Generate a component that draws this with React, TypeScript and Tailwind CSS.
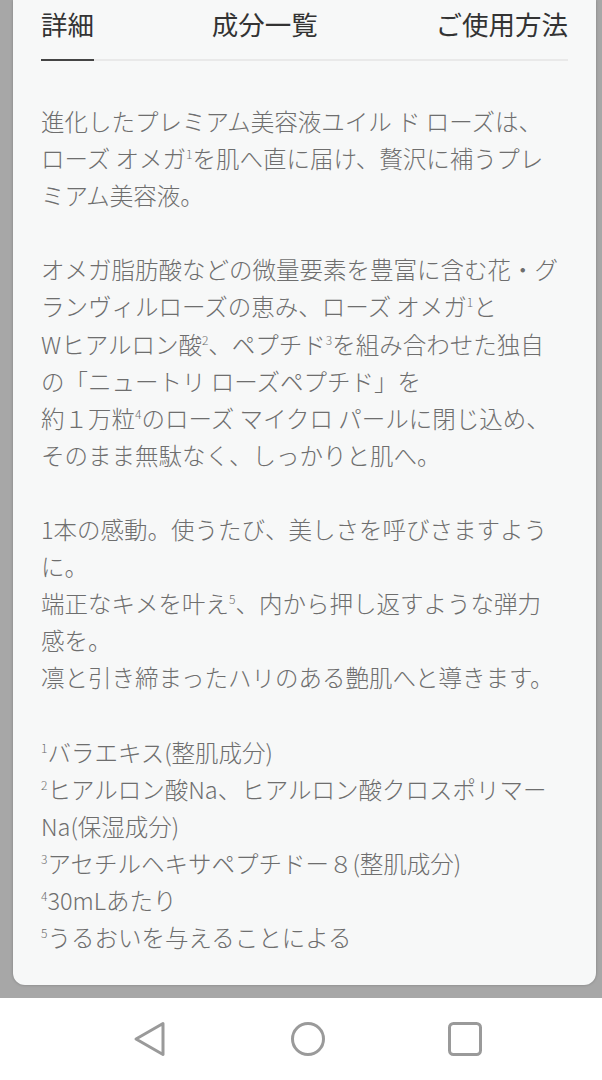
import React from 'react';

const TABS = ['詳細', '成分一覧', 'ご使用方法'];

function Sup({ n }: { n: string }) {
  return <sup className="text-[12px] top-[-9px]">{n}</sup>;
}

export default function App() {
  return (
    <div
      className="w-[602px] h-[1080px] flex flex-col overflow-hidden"
      style={{ fontFamily: '"Noto Sans CJK JP", "Noto Sans", sans-serif' }}
    >
      <div className="flex-1 bg-[#a7a7a7] pl-[13px] pr-[6px] pb-[13px] flex flex-col">
        <div className="flex-1 bg-[#f7f8f8] rounded-b-[12px] px-[28px] shadow-[0_0_3px_rgba(0,0,0,0.25)]">
          {/* tabs */}
          <div className="flex justify-between border-b-2 border-[#e9e9e9] pt-[6px]">
            {TABS.map((t, i) => (
              <div
                key={t}
                className={`text-[26.5px] leading-[36px] text-[#333] pb-[17px] -mb-[2px] ${
                  i === 0 ? 'border-b-2 border-[#444]' : 'border-b-2 border-transparent'
                }`}
              >
                {t}
              </div>
            ))}
          </div>

          <div className="mt-[42px] text-[23.5px] leading-[37.1px] font-light text-[#6e6e6e]">
            <p>
              進化したプレミアム美容液ユイル ド ローズは、<br />
              ローズ オメガ<Sup n="1" />を肌へ直に届け、贅沢に補うプレ<br />
              ミアム美容液。
            </p>
            <br />
            <p>
              オメガ脂肪酸などの微量要素を豊富に含む花・グ<br />
              ランヴィルローズの恵み、ローズ オメガ<Sup n="1" />と<br />
              Wヒアルロン酸<Sup n="2" />、ペプチド<Sup n="3" />を組み合わせた独自<br />
              の「ニュートリ ローズペプチド」を<br />
              約１万粒<Sup n="4" />のローズ マイクロ パールに閉じ込め、<br />
              そのまま無駄なく、しっかりと肌へ。
            </p>
            <br />
            <p>
              1本の感動。使うたび、美しさを呼びさますよう<br />
              に。<br />
              端正なキメを叶え<Sup n="5" />、内から押し返すような弾力<br />
              感を。<br />
              凛と引き締まったハリのある艶肌へと導きます。
            </p>
            <br />
            <p>
              <Sup n="1" />バラエキス(整肌成分)<br />
              <Sup n="2" />ヒアルロン酸Na、ヒアルロン酸クロスポリマー<br />
              Na(保湿成分)<br />
              <Sup n="3" />アセチルヘキサペプチドー８(整肌成分)<br />
              <Sup n="4" />30mLあたり<br />
              <Sup n="5" />うるおいを与えることによる
            </p>
          </div>
        </div>
      </div>

      {/* navigation bar */}
      <div className="h-[82px] bg-white flex items-center justify-center gap-[121px] pl-[14px]">
        <svg width="36" height="36" viewBox="0 0 36 36" fill="none" stroke="#9a9a9a" strokeWidth="3" strokeLinejoin="round" strokeLinecap="round">
          <path d="M30 2.5 L3 18 L30 33.5 Z" />
        </svg>
        <svg width="36" height="36" viewBox="0 0 36 36" fill="none" stroke="#9a9a9a" strokeWidth="3">
          <circle cx="18" cy="18" r="15.5" />
        </svg>
        <svg width="36" height="36" viewBox="0 0 36 36" fill="none" stroke="#9a9a9a" strokeWidth="3">
          <rect x="2.5" y="2.5" width="31" height="31" rx="4" />
        </svg>
      </div>
    </div>
  );
}
